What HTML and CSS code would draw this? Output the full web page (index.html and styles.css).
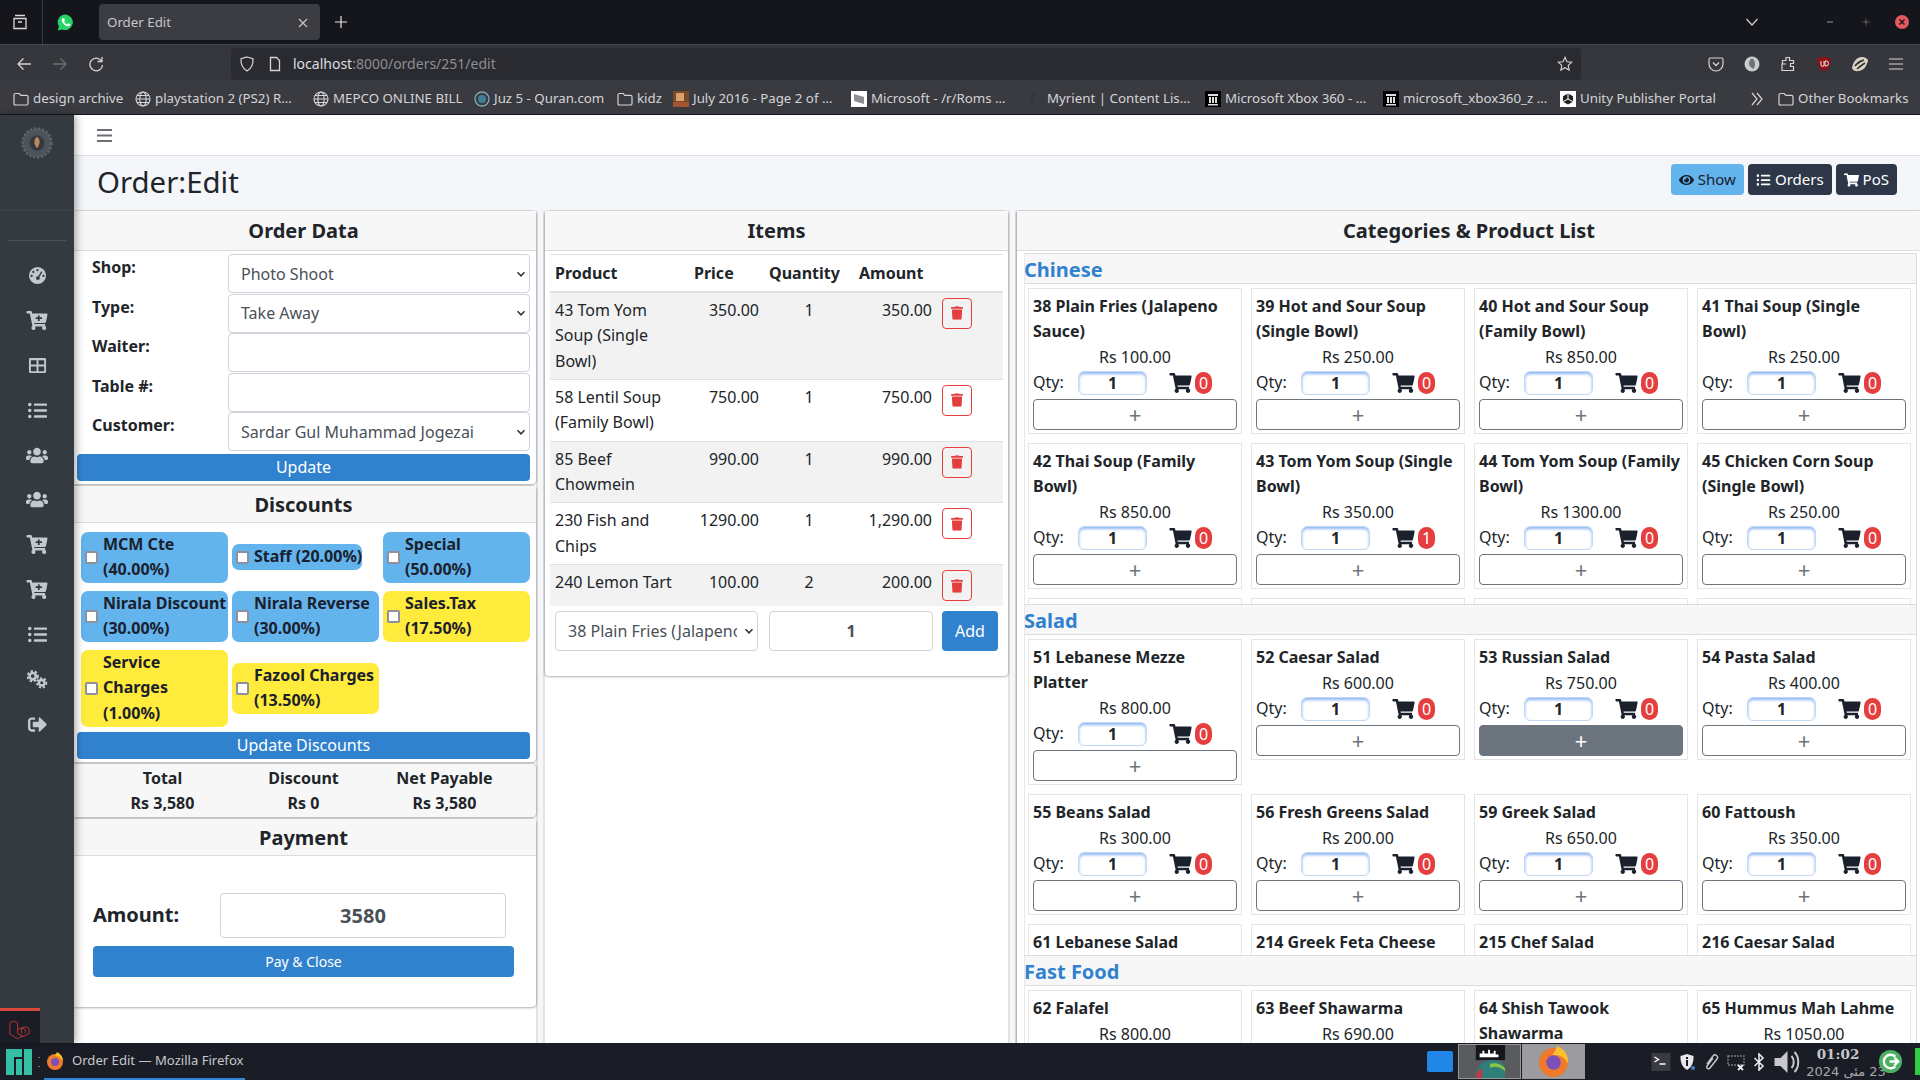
FILE: index.html
```html
<!DOCTYPE html>
<html lang="en">
<head>
    <meta charset="UTF-8">
    <title>Order Edit</title>
    <link rel="stylesheet" href="styles.css">
</head>
<body>
    <svg class="icon-defs" aria-hidden="true">
        <symbol id="i-cart" viewBox="0 0 576 512"><path d="M528.12 301.319l47.273-208C578.806 78.301 567.391 64 551.99 64H159.208l-9.166-44.81C147.758 8.021 137.93 0 126.529 0H24C10.745 0 0 10.745 0 24v16c0 13.255 10.745 24 24 24h69.883l70.248 343.435C147.325 417.1 136 435.222 136 456c0 30.928 25.072 56 56 56s56-25.072 56-56c0-15.674-6.447-29.835-16.824-40h209.647C430.447 426.165 424 440.326 424 456c0 30.928 25.072 56 56 56s56-25.072 56-56c0-22.172-12.888-41.332-31.579-50.405l5.517-24.276c3.413-15.018-8.002-29.319-23.403-29.319H218.117l-6.545-32h293.145c11.206 0 20.92-7.754 23.403-18.681z"/></symbol>
        <symbol id="i-cart-plus" viewBox="0 0 576 512"><path d="M504.717 320H211.572l6.545 32h268.418c15.401 0 26.816 14.301 23.403 29.319l-5.517 24.276C523.112 414.668 536 433.828 536 456c0 31.202-25.519 56.444-56.824 55.994-29.823-.429-54.35-24.631-55.155-54.447-.44-16.287 6.085-31.049 16.803-41.548H231.176C241.553 426.165 248 440.326 248 456c0 31.813-26.528 57.431-58.67 55.938-28.54-1.325-51.751-24.385-53.251-52.917-1.158-22.034 10.436-41.455 28.051-51.586L93.883 64H24C10.745 64 0 53.255 0 40V24C0 10.745 10.745 0 24 0h102.529c11.401 0 21.228 8.021 23.513 19.19L159.208 64H551.99c15.401 0 26.816 14.301 23.403 29.319l-47.273 208C525.637 312.246 515.923 320 504.717 320zM408 168h-48v-40c0-8.837-7.163-16-16-16h-16c-8.837 0-16 7.163-16 16v40h-48c-8.837 0-16 7.163-16 16v16c0 8.837 7.163 16 16 16h48v40c0 8.837 7.163 16 16 16h16c8.837 0 16-7.163 16-16v-40h48c8.837 0 16-7.163 16-16v-16c0-8.837-7.163-16-16-16z"/></symbol>
        <symbol id="i-trash" viewBox="0 0 448 512"><path d="M432 32H312l-9.4-18.7A24 24 0 0 0 281.1 0H166.8a23.72 23.72 0 0 0-21.4 13.3L136 32H16A16 16 0 0 0 0 48v32a16 16 0 0 0 16 16h416a16 16 0 0 0 16-16V48a16 16 0 0 0-16-16zM53.2 467a48 48 0 0 0 47.9 45h245.8a48 48 0 0 0 47.9-45L416 128H32z"/></symbol>
        <symbol id="i-list" viewBox="0 0 512 512"><path d="M48 48a48 48 0 1 0 48 48 48 48 0 0 0-48-48zm0 160a48 48 0 1 0 48 48 48 48 0 0 0-48-48zm0 160a48 48 0 1 0 48 48 48 48 0 0 0-48-48zm448 16H176a16 16 0 0 0-16 16v32a16 16 0 0 0 16 16h320a16 16 0 0 0 16-16v-32a16 16 0 0 0-16-16zm0-320H176a16 16 0 0 0-16 16v32a16 16 0 0 0 16 16h320a16 16 0 0 0 16-16V80a16 16 0 0 0-16-16zm0 160H176a16 16 0 0 0-16 16v32a16 16 0 0 0 16 16h320a16 16 0 0 0 16-16v-32a16 16 0 0 0-16-16z"/></symbol>
        <symbol id="i-eye" viewBox="0 0 576 512"><path d="M572.52 241.4C518.29 135.59 410.93 64 288 64S57.68 135.64 3.48 241.41a32.35 32.35 0 0 0 0 29.19C57.71 376.41 165.07 448 288 448s230.32-71.64 284.52-177.41a32.35 32.35 0 0 0 0-29.19zM288 400a144 144 0 1 1 144-144 143.93 143.93 0 0 1-144 144zm0-240a95.31 95.31 0 0 0-25.31 3.79 47.85 47.85 0 0 1-66.9 66.9A95.78 95.78 0 1 0 288 160z"/></symbol>
        <symbol id="i-users" viewBox="0 0 640 512"><path d="M96 224c35.3 0 64-28.7 64-64s-28.7-64-64-64-64 28.7-64 64 28.7 64 64 64zm448 0c35.3 0 64-28.7 64-64s-28.7-64-64-64-64 28.7-64 64 28.7 64 64 64zm32 32h-64c-17.6 0-33.5 7.1-45.1 18.6 40.3 22.1 68.9 62 75.1 109.4h66c17.7 0 32-14.3 32-32v-32c0-35.3-28.7-64-64-64zm-256 0c61.9 0 112-50.1 112-112S381.9 32 320 32 208 82.1 208 144s50.1 112 112 112zm76.8 32h-8.3c-20.8 10-43.9 16-68.5 16s-47.6-6-68.5-16h-8.3C179.6 288 128 339.6 128 403.2V432c0 26.5 21.5 48 48 48h288c26.5 0 48-21.5 48-48v-28.8c0-63.6-51.6-115.2-115.2-115.2zm-223.7-13.4C161.5 263.1 145.6 256 128 256H64c-35.3 0-64 28.7-64 64v32c0 17.7 14.3 32 32 32h65.9c6.3-47.4 34.9-87.3 75.2-109.4z"/></symbol>
        <symbol id="i-signout" viewBox="0 0 512 512"><path d="M497 273L329 441c-15 15-41 4.5-41-17v-96H152c-13.3 0-24-10.7-24-24v-96c0-13.3 10.7-24 24-24h136V88c0-21.4 25.9-32 41-17l168 168c9.3 9.4 9.3 24.6 0 34zM192 436v-40c0-6.6-5.4-12-12-12H96c-17.7 0-32-14.3-32-32V160c0-17.7 14.3-32 32-32h84c6.6 0 12-5.4 12-12V76c0-6.6-5.4-12-12-12H96c-53 0-96 43-96 96v192c0 53 43 96 96 96h84c6.6 0 12-5.4 12-12z"/></symbol>
        <symbol id="i-gauge" viewBox="0 0 20 20"><path fill-rule="evenodd" d="M10 1a9 9 0 1 1 0 18 9 9 0 0 1 0-18zM10 3.2a1.2 1.2 0 1 0 0 2.4 1.2 1.2 0 0 0 0-2.4zM5.6 5a1.2 1.2 0 1 0 0 2.4 1.2 1.2 0 0 0 0-2.4zM3.8 9.2a1.2 1.2 0 1 0 0 2.4 1.2 1.2 0 0 0 0-2.4zM16.2 9.2a1.2 1.2 0 1 0 0 2.4 1.2 1.2 0 0 0 0-2.4zM14 5.6l-3.2 5.3a1.9 1.9 0 1 0 1.2.8l3.2-5.3z"/></symbol>
        <symbol id="i-table" viewBox="0 0 20 20"><path fill-rule="evenodd" d="M2.5 2h15A1.5 1.5 0 0 1 19 3.500v13a1.500 1.500 0 0 1-1.500 1.500h-15A1.500 1.500 0 0 1 1 16.500v-13A1.500 1.500 0 0 1 2.500 2zM3 4.500V9h6V4.500zM11 4.500V9h6V4.500zM3 11v5h6v-5zM11 11v5h6v-5z"/></symbol>
        <symbol id="i-cogs" viewBox="0 0 22 20"><circle cx="6.500" cy="6.500" r="3.300" fill="none" stroke="currentColor" stroke-width="2.800"/><circle cx="6.500" cy="6.500" r="5.400" fill="none" stroke="currentColor" stroke-width="2" stroke-dasharray="2.500 2"/><circle cx="16" cy="13.500" r="2.900" fill="none" stroke="currentColor" stroke-width="2.600"/><circle cx="16" cy="13.500" r="5" fill="none" stroke="currentColor" stroke-width="2" stroke-dasharray="2.300 1.900"/></symbol>
        <symbol id="i-folder" viewBox="0 0 16 16"><path d="M2.500 2.500h3.800l1.500 1.800h5.700a1.500 1.500 0 0 1 1.500 1.500v6.700a1.500 1.500 0 0 1-1.500 1.500h-10.500A1.500 1.500 0 0 1 1 13V4a1.500 1.500 0 0 1 1.500-1.500z" fill="none" stroke="currentColor" stroke-width="1.200"/></symbol>
        <symbol id="i-globe" viewBox="0 0 16 16"><g fill="none" stroke="currentColor" stroke-width="1.100"><circle cx="8" cy="8" r="7"/><ellipse cx="8" cy="8" rx="3.200" ry="7"/><path d="M1 8h14M2 4.500h12M2 11.500h12"/></g></symbol>
    </svg>

    <!-- browser window chrome -->
    <div class="tab-bar">
        <div class="tab-side">
            <svg class="tab-tool" viewBox="0 0 16 16"><path d="M3 1.500h10M2 4.500h12v10H2zM6 8h4" fill="none" stroke="#d8d8dc" stroke-width="1.300"/></svg>
        </div>
        <svg class="tab-whatsapp" viewBox="0 0 16 16"><path d="M8 .5a7.300 7.300 0 0 0-6.200 11.200L.8 15.500l3.900-1A7.300 7.300 0 1 0 8 .5z" fill="#25d366"/><path d="M5.500 4c-.8.5-1.300 1.500-.8 2.900.9 2.300 2.500 3.900 4.700 4.700 1.400.4 2.400 0 2.800-.9l.2-1-1.900-.9-.9 1c-1.200-.5-2.300-1.500-2.900-2.800l.8-.9-.8-2z" fill="#fff"/></svg>
        <div class="tab">
            <span>Order Edit</span>
            <svg class="tab-close" viewBox="0 0 10 10"><path d="M1 1l8 8M9 1l-8 8" stroke="#c8c8cc" stroke-width="1.100"/></svg>
        </div>
        <svg class="tab-new" viewBox="0 0 12 12"><path d="M6 0v12M0 6h12" stroke="#e4e4e8" stroke-width="1.200"/></svg>
        <div class="tab-bar-end">
            <svg class="win-list" viewBox="0 0 12 8"><path d="M.5 1l5.500 6 5.500-6" fill="none" stroke="#d0d0d4" stroke-width="1.200"/></svg>
            <span class="win-min"></span>
            <svg class="win-max" viewBox="0 0 10 10"><path d="M5 0l.8 4.200L10 5l-4.200.8L5 10l-.8-4.200L0 5l4.200-.8z" fill="#55565b"/></svg>
            <svg class="win-close" viewBox="0 0 14 14"><circle cx="7" cy="7" r="7" fill="#e05a5f"/><path d="M4.500 4.500l5 5M9.500 4.500l-5 5" stroke="#33171a" stroke-width="1.600"/></svg>
        </div>
    </div>

    <div class="nav-bar">
        <svg class="nav-btn" viewBox="0 0 16 16"><path d="M15 8H2M7.500 2.500 2 8l5.500 5.500" fill="none" stroke="#d4d4d8" stroke-width="1.300"/></svg>
        <svg class="nav-btn" viewBox="0 0 16 16"><path d="M1 8h13M8.500 2.500 14 8l-5.500 5.500" fill="none" stroke="#6c6d72" stroke-width="1.300"/></svg>
        <svg class="nav-btn" viewBox="0 0 16 16"><path d="M13.500 5A6.300 6.300 0 1 0 14.500 9M14 1v4.500H9.500" fill="none" stroke="#d4d4d8" stroke-width="1.300"/></svg>
        <div class="url-bar">
            <svg class="url-icon" viewBox="0 0 16 16"><path d="M8 1l6 1.800c.3 5.200-1.500 9.700-6 12.200C3.500 12.500 1.700 8 2 2.800z" fill="none" stroke="#d4d4d8" stroke-width="1.200"/></svg>
            <svg class="url-icon" viewBox="0 0 16 16"><path d="M3.500 1.500h6l3 3v10h-9z" fill="none" stroke="#d4d4d8" stroke-width="1.300"/></svg>
            <span class="url-text"><b>localhost</b>:8000/orders/251/edit</span>
            <svg class="url-star" viewBox="0 0 16 16"><path d="M8 1.300l2 4.400 4.800.5-3.600 3.200 1 4.700L8 11.700l-4.200 2.400 1-4.700L1.200 6.200 6 5.700z" fill="none" stroke="#d4d4d8" stroke-width="1.100"/></svg>
        </div>
        <div class="nav-tools">
            <svg viewBox="0 0 16 16"><path d="M2.500 2h11A1.500 1.500 0 0 1 15 3.500V8A7 7 0 0 1 1 8V3.500A1.500 1.500 0 0 1 2.500 2z" fill="none" stroke="#d4d4d8" stroke-width="1.200"/><path d="M5 6.500l3 3 3-3" fill="none" stroke="#d4d4d8" stroke-width="1.300"/></svg>
            <svg viewBox="0 0 16 16"><circle cx="8" cy="8" r="7.500" fill="#c9cbcf"/><path d="M8 2.500c3 1 3.800 6 2 10-2.500.5-5.500-3-5-6 .500-2 1.500-3.500 3-4z" fill="#6f7277"/></svg>
            <svg viewBox="0 0 16 16"><path d="M6 1.500h3.500v3h4v3h-3v3h3v4H2v-6.500h4V8H2.500V4.500H6z" fill="none" stroke="#d4d4d8" stroke-width="1.200"/></svg>
            <svg viewBox="0 0 16 16"><path d="M8 .5l6.500 2c.3 6-1.500 10.500-6.500 13C3 13 1.200 8.500 1.500 2.500z" fill="#8c1218"/><path d="M5 5v4a1.500 1.500 0 0 0 3 0V5M9 5v5h1a2.500 2.500 0 0 0 0-5z" fill="none" stroke="#f0e6e6" stroke-width="1"/></svg>
            <svg viewBox="0 0 16 16"><path d="M0 12C1 6 4 2 9 1c3-.5 6 1 7 3-1 6-4 10-9 11-3 .5-6 0-7-3z" fill="#d9d3c4"/><path d="M3 10c2-3 5-5 9-6M5 13c2-2 5-4 8-6" stroke="#33332f" stroke-width="1.600"/></svg>
            <svg viewBox="0 0 16 16"><path d="M1 3h14M1 8h14M1 13h14" stroke="#d4d4d8" stroke-width="1.200"/></svg>
        </div>
    </div>

    <div class="bookmarks">
        <a class="bm"><svg class="bm-icon"><use href="#i-folder"/></svg>design archive</a>
        <a class="bm"><svg class="bm-icon"><use href="#i-globe"/></svg>playstation 2 (PS2) R…</a>
        <a class="bm"><svg class="bm-icon"><use href="#i-globe"/></svg>MEPCO ONLINE BILL</a>
        <a class="bm"><svg class="bm-icon" viewBox="0 0 16 16"><circle cx="8" cy="8" r="7" fill="none" stroke="#7fa7b5" stroke-width="1.400"/><circle cx="8" cy="8" r="4" fill="#3f7f95"/></svg>Juz 5 - Quran.com</a>
        <a class="bm"><svg class="bm-icon"><use href="#i-folder"/></svg>kidz</a>
        <a class="bm"><svg class="bm-icon" viewBox="0 0 16 16"><rect width="16" height="16" fill="#7a4a2a"/><rect x="3" y="2" width="8" height="8" fill="#d9a06b"/><rect y="11" width="16" height="5" fill="#a3552f"/></svg>July 2016 - Page 2 of …</a>
        <a class="bm"><svg class="bm-icon" viewBox="0 0 16 16"><rect width="16" height="16" fill="#fff"/><path d="M3 3l10 3v7L3 10z" fill="#8d8f93"/></svg>Microsoft - /r/Roms …</a>
        <a class="bm"><svg class="bm-icon" viewBox="0 0 16 16"><path d="M10 3a5 5 0 1 0 0 9 4 4 0 1 1 0-9z" fill="#33343f"/></svg>Myrient | Content Lis…</a>
        <a class="bm"><svg class="bm-icon" viewBox="0 0 16 16"><rect width="16" height="16" fill="#000"/><path d="M3 3h10v2H3zM4 6h2v6H4zM7 6h2v6H7zM10 6h2v6h-2zM3 13h10v1.500H3z" fill="#ddd"/></svg>Microsoft Xbox 360 - …</a>
        <a class="bm"><svg class="bm-icon" viewBox="0 0 16 16"><rect width="16" height="16" fill="#000"/><path d="M3 3h10v2H3zM4 6h2v6H4zM7 6h2v6H7zM10 6h2v6h-2zM3 13h10v1.500H3z" fill="#ddd"/></svg>microsoft_xbox360_z …</a>
        <a class="bm"><svg class="bm-icon" viewBox="0 0 16 16"><rect width="16" height="16" fill="#fff"/><path d="M8 2.500l5 2.800v5.400l-5 2.800-5-2.800V5.300z" fill="#222"/><path d="M8 8V2.500M8 8l-5 2.700M8 8l5 2.700" stroke="#fff"/></svg>Unity Publisher Portal</a>
        <svg class="bm-more" viewBox="0 0 14 14"><path d="M2 1l5 6-5 6M7 1l5 6-5 6" fill="none" stroke="#d4d4d8" stroke-width="1.200"/></svg>
        <a class="bm"><svg class="bm-icon"><use href="#i-folder"/></svg>Other Bookmarks</a>
    </div>

    <!-- the page itself -->
    <div class="app">
        <aside class="sidebar">
            <div class="side-logo">
                <svg viewBox="0 0 28 28"><circle cx="14" cy="14" r="12.500" fill="#4d535b" stroke="#5d636b" stroke-width="2.500" stroke-dasharray="2 1.500"/><circle cx="14" cy="14" r="6.500" fill="#343940"/><path d="M14 8.500c3 2 3 6.500 0 10-3-3.500-3-8 0-10z" fill="#bd875e"/></svg>
            </div>
            <div class="side-rule"></div>
            <nav class="side-nav">
                <svg viewBox="0 0 20 20"><use href="#i-gauge"/></svg>
                <svg class="wide" viewBox="0 0 576 512"><use href="#i-cart-plus"/></svg>
                <svg viewBox="0 0 20 20"><use href="#i-table"/></svg>
                <svg viewBox="0 0 512 512"><use href="#i-list"/></svg>
                <svg class="wide" viewBox="0 0 640 512"><use href="#i-users"/></svg>
                <svg class="wide" viewBox="0 0 640 512"><use href="#i-users"/></svg>
                <svg class="wide" viewBox="0 0 576 512"><use href="#i-cart-plus"/></svg>
                <svg class="wide" viewBox="0 0 576 512"><use href="#i-cart-plus"/></svg>
                <svg viewBox="0 0 512 512"><use href="#i-list"/></svg>
                <svg class="wide" viewBox="0 0 22 20"><use href="#i-cogs"/></svg>
                <svg viewBox="0 0 512 512"><use href="#i-signout"/></svg>
            </nav>
        </aside>

        <main class="main">
            <div class="topbar">
                <svg class="burger" viewBox="0 0 15 13"><path d="M0 1h15M0 6.500h15M0 12h15" stroke="#6b6e72" stroke-width="2"/></svg>
            </div>
            <div class="page-head">
                <h1>Order:Edit</h1>
                <div class="head-btns">
                    <a class="btn btn-info"><svg viewBox="0 0 576 512"><use href="#i-eye"/></svg>Show</a>
                    <a class="btn btn-dark"><svg viewBox="0 0 512 512"><use href="#i-list"/></svg>Orders</a>
                    <a class="btn btn-dark"><svg viewBox="0 0 576 512"><use href="#i-cart"/></svg>PoS</a>
                </div>
            </div>

            <div class="columns">
                <!-- left: order data, discounts, payment -->
                <div class="col col-left">
                    <section class="card">
                        <h3 class="card-title">Order Data</h3>
                        <div class="order-form">
                            <label>Shop:</label>
                            <select class="field"><option>Photo Shoot</option></select>
                            <label>Type:</label>
                            <select class="field"><option>Take Away</option></select>
                            <label>Waiter:</label>
                            <input class="field" type="text">
                            <label>Table #:</label>
                            <input class="field" type="text">
                            <label>Customer:</label>
                            <select class="field"><option>Sardar Gul Muhammad Jogezai</option></select>
                        </div>
                        <button class="btn-block">Update</button>
                    </section>

                    <section class="card">
                        <h3 class="card-title card-title-sm">Discounts</h3>
                        <div class="discounts">
                            <label class="chip chip-blue"><input type="checkbox"><span>MCM Cte (40.00%)</span></label>
                            <label class="chip chip-blue"><input type="checkbox"><span>Staff (20.00%)</span></label>
                            <label class="chip chip-blue"><input type="checkbox"><span>Special (50.00%)</span></label>
                            <label class="chip chip-blue"><input type="checkbox"><span>Nirala Discount (30.00%)</span></label>
                            <label class="chip chip-blue"><input type="checkbox"><span>Nirala Reverse (30.00%)</span></label>
                            <label class="chip chip-yellow"><input type="checkbox"><span>Sales.Tax (17.50%)</span></label>
                            <label class="chip chip-yellow"><input type="checkbox"><span>Service Charges (1.00%)</span></label>
                            <label class="chip chip-yellow"><input type="checkbox"><span>Fazool Charges (13.50%)</span></label>
                        </div>
                        <button class="btn-block">Update Discounts</button>
                    </section>

                    <section class="card totals">
                        <div>Total<br>Rs 3,580</div>
                        <div>Discount<br>Rs 0</div>
                        <div>Net Payable<br>Rs 3,580</div>
                    </section>

                    <section class="card">
                        <h3 class="card-title card-title-sm">Payment</h3>
                        <div class="payment">
                            <div class="amount-row">
                                <label>Amount:</label>
                                <input class="amount" type="text" value="3580">
                            </div>
                            <button class="btn-pay">Pay &amp; Close</button>
                        </div>
                    </section>
                </div>

                <!-- middle: items on the order -->
                <div class="col col-items">
                    <section class="card">
                        <h3 class="card-title">Items</h3>
                        <table class="items">
                            <thead>
                                <tr><th class="c-prod">Product</th><th class="c-price">Price</th><th class="c-qty">Quantity</th><th class="c-amt">Amount</th><th class="c-act"></th></tr>
                            </thead>
                            <tbody>
                                <tr><td>43 Tom Yom Soup (Single Bowl)</td><td class="num">350.00</td><td class="mid">1</td><td class="num">350.00</td><td><button class="del-btn"><svg viewBox="0 0 448 512"><use href="#i-trash"/></svg></button></td></tr>
                                <tr><td>58 Lentil Soup (Family Bowl)</td><td class="num">750.00</td><td class="mid">1</td><td class="num">750.00</td><td><button class="del-btn"><svg viewBox="0 0 448 512"><use href="#i-trash"/></svg></button></td></tr>
                                <tr><td>85 Beef Chowmein</td><td class="num">990.00</td><td class="mid">1</td><td class="num">990.00</td><td><button class="del-btn"><svg viewBox="0 0 448 512"><use href="#i-trash"/></svg></button></td></tr>
                                <tr><td>230 Fish and Chips</td><td class="num">1290.00</td><td class="mid">1</td><td class="num">1,290.00</td><td><button class="del-btn"><svg viewBox="0 0 448 512"><use href="#i-trash"/></svg></button></td></tr>
                                <tr><td>240 Lemon Tart</td><td class="num">100.00</td><td class="mid">2</td><td class="num">200.00</td><td><button class="del-btn"><svg viewBox="0 0 448 512"><use href="#i-trash"/></svg></button></td></tr>
                            </tbody>
                        </table>
                        <div class="add-row">
                            <select class="field add-select"><option>38 Plain Fries (Jalapeno Sauce)</option></select>
                            <input class="field add-qty" type="text" value="1">
                            <button class="add-submit">Add</button>
                        </div>
                    </section>
                </div>

                <!-- right: product picker -->
                <div class="col col-products">
                    <section class="card card-products">
                        <h3 class="card-title">Categories &amp; Product List</h3>
                        <div class="category">
                            <h4 class="cat-title">Chinese</h4>
                            <div class="product-grid">
                                <div class="product"><b>38 Plain Fries (Jalapeno Sauce)</b><p>Rs 100.00</p><div class="qty-row"><span>Qty:</span><input class="qty" value="1"><svg viewBox="0 0 576 512"><use href="#i-cart"/></svg><i>0</i></div><button class="plus">+</button></div>
                                <div class="product"><b>39 Hot and Sour Soup (Single Bowl)</b><p>Rs 250.00</p><div class="qty-row"><span>Qty:</span><input class="qty" value="1"><svg viewBox="0 0 576 512"><use href="#i-cart"/></svg><i>0</i></div><button class="plus">+</button></div>
                                <div class="product"><b>40 Hot and Sour Soup (Family Bowl)</b><p>Rs 850.00</p><div class="qty-row"><span>Qty:</span><input class="qty" value="1"><svg viewBox="0 0 576 512"><use href="#i-cart"/></svg><i>0</i></div><button class="plus">+</button></div>
                                <div class="product"><b>41 Thai Soup (Single Bowl)</b><p>Rs 250.00</p><div class="qty-row"><span>Qty:</span><input class="qty" value="1"><svg viewBox="0 0 576 512"><use href="#i-cart"/></svg><i>0</i></div><button class="plus">+</button></div>
                                <div class="product"><b>42 Thai Soup (Family Bowl)</b><p>Rs 850.00</p><div class="qty-row"><span>Qty:</span><input class="qty" value="1"><svg viewBox="0 0 576 512"><use href="#i-cart"/></svg><i>0</i></div><button class="plus">+</button></div>
                                <div class="product"><b>43 Tom Yom Soup (Single Bowl)</b><p>Rs 350.00</p><div class="qty-row"><span>Qty:</span><input class="qty" value="1"><svg viewBox="0 0 576 512"><use href="#i-cart"/></svg><i>1</i></div><button class="plus">+</button></div>
                                <div class="product"><b>44 Tom Yom Soup (Family Bowl)</b><p>Rs 1300.00</p><div class="qty-row"><span>Qty:</span><input class="qty" value="1"><svg viewBox="0 0 576 512"><use href="#i-cart"/></svg><i>0</i></div><button class="plus">+</button></div>
                                <div class="product"><b>45 Chicken Corn Soup (Single Bowl)</b><p>Rs 250.00</p><div class="qty-row"><span>Qty:</span><input class="qty" value="1"><svg viewBox="0 0 576 512"><use href="#i-cart"/></svg><i>0</i></div><button class="plus">+</button></div>
                                <div class="product product-peek"></div>
                                <div class="product product-peek"></div>
                                <div class="product product-peek"></div>
                                <div class="product product-peek"></div>
                            </div>
                        </div>
                        <div class="category">
                            <h4 class="cat-title">Salad</h4>
                            <div class="product-grid">
                                <div class="product"><b>51 Lebanese Mezze Platter</b><p>Rs 800.00</p><div class="qty-row"><span>Qty:</span><input class="qty" value="1"><svg viewBox="0 0 576 512"><use href="#i-cart"/></svg><i>0</i></div><button class="plus">+</button></div>
                                <div class="product"><b>52 Caesar Salad</b><p>Rs 600.00</p><div class="qty-row"><span>Qty:</span><input class="qty" value="1"><svg viewBox="0 0 576 512"><use href="#i-cart"/></svg><i>0</i></div><button class="plus">+</button></div>
                                <div class="product"><b>53 Russian Salad</b><p>Rs 750.00</p><div class="qty-row"><span>Qty:</span><input class="qty" value="1"><svg viewBox="0 0 576 512"><use href="#i-cart"/></svg><i>0</i></div><button class="plus plus-hover">+</button></div>
                                <div class="product"><b>54 Pasta Salad</b><p>Rs 400.00</p><div class="qty-row"><span>Qty:</span><input class="qty" value="1"><svg viewBox="0 0 576 512"><use href="#i-cart"/></svg><i>0</i></div><button class="plus">+</button></div>
                                <div class="product"><b>55 Beans Salad</b><p>Rs 300.00</p><div class="qty-row"><span>Qty:</span><input class="qty" value="1"><svg viewBox="0 0 576 512"><use href="#i-cart"/></svg><i>0</i></div><button class="plus">+</button></div>
                                <div class="product"><b>56 Fresh Greens Salad</b><p>Rs 200.00</p><div class="qty-row"><span>Qty:</span><input class="qty" value="1"><svg viewBox="0 0 576 512"><use href="#i-cart"/></svg><i>0</i></div><button class="plus">+</button></div>
                                <div class="product"><b>59 Greek Salad</b><p>Rs 650.00</p><div class="qty-row"><span>Qty:</span><input class="qty" value="1"><svg viewBox="0 0 576 512"><use href="#i-cart"/></svg><i>0</i></div><button class="plus">+</button></div>
                                <div class="product"><b>60 Fattoush</b><p>Rs 350.00</p><div class="qty-row"><span>Qty:</span><input class="qty" value="1"><svg viewBox="0 0 576 512"><use href="#i-cart"/></svg><i>0</i></div><button class="plus">+</button></div>
                                <div class="product"><b>61 Lebanese Salad</b></div>
                                <div class="product"><b>214 Greek Feta Cheese</b></div>
                                <div class="product"><b>215 Chef Salad</b></div>
                                <div class="product"><b>216 Caesar Salad</b></div>
                            </div>
                        </div>
                        <div class="category">
                            <h4 class="cat-title">Fast Food</h4>
                            <div class="product-grid">
                                <div class="product"><b>62 Falafel</b><p>Rs 800.00</p></div>
                                <div class="product"><b>63 Beef Shawarma</b><p>Rs 690.00</p></div>
                                <div class="product"><b>64 Shish Tawook Shawarma</b><p>Rs 1050.00</p></div>
                                <div class="product"><b>65 Hummus Mah Lahme</b><p>Rs 1050.00</p></div>
                            </div>
                        </div>
                    </section>
                </div>
            </div>
        </main>

        <!-- debugbar tab sits over the corner -->
        <div class="debug-tab">
            <svg viewBox="0 0 24 24"><path d="M2 5l4 -2 4 2v11l6 3.500 6-3.500v-5l-4-2-4 2v5M10 12l4-2 4 2v4M2 5v12l8 4.500 6-3" fill="none" stroke="#c0332e" stroke-width="1"/></svg>
        </div>
    </div>

    <!-- desktop panel -->
    <div class="taskbar">
        <svg class="tb-logo" viewBox="0 0 26 26"><path d="M0 0h16v8H8v18H0zM10 10h6v16h-6zM18 0h8v26h-8z" fill="#35bfa4"/></svg>
        <span class="tb-grip"></span>
        <div class="tb-task">
            <svg viewBox="0 0 18 18"><circle cx="9" cy="10" r="8" fill="#f0792b"/><circle cx="9" cy="10" r="4" fill="#7c50b8"/><path d="M11 0c4 2 6 5 6 9-2-3-5-5-8-5z" fill="#fbc02d"/></svg>
            <span>Order Edit — Mozilla Firefox</span>
        </div>
        <div class="tb-end">
            <span class="tb-blue"></span>
            <div class="tb-thumb tb-thumb-dark">
                <svg viewBox="0 0 59 35"><rect x="15" width="31" height="16" fill="#15161b"/><path d="M19 9h3v-3h2v3h4V5h2v4h4V6h2v4h3v3H19z" fill="#fff"/><path d="M15 35c0-10 6-18 15-19 8-1 14 2 16 8v11z" fill="#2f7f7a"/><path d="M15 35c0-6 3-9 7-10v10z" fill="#b83b4c"/><path d="M30 20c6-2 12 0 16 5v3c-4-5-10-6-16-4z" fill="#8fc63f"/></svg>
            </div>
            <div class="tb-thumb tb-thumb-light">
                <svg viewBox="0 0 32 32"><circle cx="16" cy="17" r="14" fill="#f0792b"/><circle cx="16" cy="17" r="7" fill="#7c50b8"/><path d="M20 1c7 4 11 9 10 17-3-6-9-9-15-8z" fill="#fbc02d"/></svg>
            </div>
            <div class="tb-tray">
                <svg class="tray-term" viewBox="0 0 19 18"><rect width="19" height="18" fill="#3a3b40"/><path d="M3 4l4 2.500-4 2.500M8 11h6" fill="none" stroke="#fff" stroke-width="1.400"/></svg>
                <svg viewBox="0 0 16 18"><path d="M8 1l6.500 2c.3 6-1.500 11-6.500 14C3 14 1.200 9 1.500 3z" fill="#e8e8e8"/><rect x="7" y="4" width="2" height="2" fill="#1a1d26"/><rect x="7" y="7" width="2" height="6" fill="#1a1d26"/><circle cx="14" cy="15" r="2" fill="#4a7fd0"/></svg>
                <svg viewBox="0 0 16 18"><path d="M4 11l6-8a2.500 2.500 0 0 1 4 3l-7 9a1.500 1.500 0 0 1-3-2l6-8" fill="none" stroke="#c8c8c8" stroke-width="1.400"/></svg>
                <svg class="tray-net" viewBox="0 0 18 18"><path d="M1 3h16v9H1z" fill="none" stroke="#777" stroke-width="1.400" stroke-dasharray="2 1"/><path d="M11 12l5 5M16 12l-5 5" stroke="#eee" stroke-width="1.800"/></svg>
                <svg class="tray-bt" viewBox="0 0 12 18"><path d="M1.500 5l8.500 8-4 4V1l4 4-8.500 8" fill="none" stroke="#ececec" stroke-width="1.600"/></svg>
                <svg class="tray-vol" viewBox="0 0 26 26"><path d="M1 9h6l7-7v22l-7-7H1z" fill="#c8c8cc"/><path d="M18 7c3 3 3 9 0 12M21 3c5 5 5 15 0 20" fill="none" stroke="#c8c8cc" stroke-width="2"/></svg>
            </div>
            <div class="tb-clock">
                <span class="tb-time">01:02</span>
                <span class="tb-date" dir="rtl">23 مئی 2024</span>
            </div>
            <svg class="tb-update" viewBox="0 0 26 26"><circle cx="13" cy="13" r="12" fill="#4caf62"/><path d="M18 8a7 7 0 1 0 0 10" fill="none" stroke="#fff" stroke-width="2.500"/><path d="M12 13h8M17 9l4 4-4 4" fill="none" stroke="#fff" stroke-width="2.500"/></svg>
            <span class="tb-bar"></span>
        </div>
    </div>
</body>
</html>
```

FILE: styles.css
```css
* {
    box-sizing: border-box;
}

html, body {
    margin: 0;
    height: 1080px;
    overflow: hidden;
}

body {
    display: flex;
    flex-direction: column;
    font-family: "Noto Sans", "DejaVu Sans", sans-serif;
    font-size: 16px;
    line-height: 25.6px;
    color: #212529;
    background: #fff;
}

.icon-defs {
    display: none;
}

/* Browser chrome */
.tab-bar {
    height: 44px;
    display: flex;
    align-items: center;
    background: #15161b;
    flex-shrink: 0;
}

.tab-side {
    width: 43px;
    height: 44px;
    display: flex;
    align-items: center;
    padding-left: 12px;
    border-right: 1px solid #3a3b40;
}

.tab-tool {
    width: 16px;
    height: 16px;
}

.tab-whatsapp {
    width: 17px;
    height: 17px;
    margin-left: 14px;
}

.tab {
    width: 221px;
    height: 36px;
    margin-left: 25px;
    padding: 1px 12px 0 8px;
    display: flex;
    align-items: center;
    justify-content: space-between;
    background: #3c3d43;
    border-radius: 4px;
    color: #c6c6ca;
    font-size: 13.3px;
}

.tab-close {
    width: 10px;
    height: 10px;
}

.tab-new {
    width: 12px;
    height: 12px;
    margin-left: 15px;
}

.tab-bar-end {
    margin-left: auto;
    display: flex;
    align-items: center;
}

.win-list {
    width: 12px;
    height: 8px;
    margin-right: 69px;
}

.win-min {
    width: 6px;
    height: 2px;
    background: #55565b;
    margin-right: 28px;
}

.win-max {
    width: 10px;
    height: 10px;
    margin-right: 24px;
}

.win-close {
    width: 14px;
    height: 14px;
    margin-right: 11px;
}

.nav-bar {
    height: 36px;
    display: flex;
    align-items: flex-end;
    background: #36373c;
    border-top: 1px solid #45464b;
    flex-shrink: 0;
}

.nav-btn {
    width: 16px;
    height: 16px;
    margin: 0 0 8px 20px;
}

.nav-btn:first-child {
    margin-left: 16px;
}

.url-bar {
    width: 1350px;
    height: 32px;
    margin-left: 127px;
    padding: 0 8px 0 8px;
    display: flex;
    align-items: center;
    background: #2a2b30;
    border-radius: 4px;
}

.url-icon {
    width: 16px;
    height: 16px;
    margin-right: 12px;
}

.url-text {
    font-size: 14px;
    color: #8e8e93;
    margin-left: -2px;
}

.url-text b {
    font-weight: 400;
    color: #dedee2;
}

.url-star {
    width: 16px;
    height: 16px;
    margin-left: auto;
}

.nav-tools {
    display: flex;
    gap: 20px;
    margin-left: 127px;
    padding-bottom: 8px;
}

.nav-tools svg {
    width: 16px;
    height: 16px;
}

.bookmarks {
    height: 35px;
    padding: 3px 0 0 13px;
    display: grid;
    grid-template-columns: 122px 178px 161px 143px 56px 178px 176px 178px 178px 177px 190px 28px 1fr;
    align-items: center;
    background: #3a3b40;
    border-bottom: 1px solid #16171b;
    color: #d4d4d8;
    font-size: 13.3px;
    flex-shrink: 0;
}

.bm {
    display: flex;
    align-items: center;
    gap: 4px;
    white-space: nowrap;
}

.bm-icon {
    width: 16px;
    height: 16px;
    flex-shrink: 0;
}

.bm-more {
    width: 14px;
    height: 14px;
}

/* App frame */
.app {
    position: relative;
    flex: 1;
    min-height: 0;
    display: flex;
}

.sidebar {
    width: 74px;
    flex-shrink: 0;
    background: #343a40;
    box-shadow: 2px 0 8px rgba(0, 0, 0, 0.35);
    z-index: 2;
}

.side-logo {
    height: 96px;
    padding-top: 12px;
    display: flex;
    justify-content: center;
    border-bottom: 1px solid #3f454b;
}

.side-logo svg {
    width: 32px;
    height: 32px;
}

.side-rule {
    height: 30px;
    margin: 0 8px;
    border-bottom: 1px solid #4b5157;
}

.side-nav {
    margin-top: 25px;
    display: flex;
    flex-direction: column;
    align-items: center;
}

.side-nav svg {
    width: 19px;
    height: 19px;
    margin-bottom: 25.9px;
    fill: #c2c7d0;
    color: #c2c7d0;
}

.side-nav .wide {
    width: 22px;
}

.main {
    flex: 1;
    min-width: 0;
    display: flex;
    flex-direction: column;
}

.topbar {
    height: 41px;
    padding-left: 23px;
    display: flex;
    align-items: center;
    background: #fff;
    border-bottom: 1px solid #dee2e6;
    flex-shrink: 0;
}

.burger {
    width: 15px;
    height: 13px;
}

.page-head {
    height: 54px;
    padding: 8px 23px 0 23px;
    display: flex;
    justify-content: space-between;
    align-items: flex-start;
    background: #f4f6f9;
    flex-shrink: 0;
}

.page-head h1 {
    margin: 0;
    font-size: 29.4px;
    font-weight: 400;
    line-height: 36px;
}

.head-btns {
    display: flex;
    gap: 4px;
}

.btn {
    height: 31px;
    padding: 0 8px;
    display: flex;
    align-items: center;
    gap: 4px;
    border-radius: 4px;
    font-size: 15px;
}

.btn svg {
    width: 15px;
    height: 14px;
    fill: currentColor;
}

.btn-info {
    background: #63b3ed;
    color: #1a202c;
}

.btn-dark {
    background: #2d3748;
    color: #fff;
}

/* Three columns */
.columns {
    flex: 1;
    min-height: 0;
    padding-top: 1px;
    display: grid;
    grid-template-columns: 464px 467px 1fr;
    gap: 5px;
    background: #f4f6f9;
    overflow: hidden;
}

.col {
    display: flex;
    flex-direction: column;
    gap: 2px;
    min-width: 0;
    background: #fff;
    border-right: 2px solid #e2e3e5;
}

.col-items {
    border-left: 2px solid #e2e3e5;
}

.col-products {
    border-left: 2px solid #e2e3e5;
    border-right: 0;
}

.card {
    background: #fff;
    border-radius: 0 4px 4px 0;
    box-shadow: 0 0 2px rgba(0, 0, 0, 0.4), 0 1px 3px rgba(0, 0, 0, 0.2);
}

.card-title {
    height: 40px;
    margin: 0;
    font-size: 20px;
    font-weight: 700;
    line-height: 40px;
    text-align: center;
    background: #f7f7f7;
    border-bottom: 1px solid #dcdcdc;
}

.card-title-sm {
    height: 37px;
    line-height: 37px;
}

.col-left .card-title {
    padding-right: 3px;
}

.order-form {
    margin-top: 3px;
    display: grid;
    grid-template-columns: 154px 302px;
    grid-auto-rows: 39.5px;
    font-weight: 700;
}

.order-form label {
    padding: 1px 0 0 18px;
}

.field {
    height: 39px;
    width: 100%;
    padding: 0 12px;
    font-family: inherit;
    font-size: 16px;
    color: #495057;
    background: #fff;
    border: 1px solid #ced4da;
    border-radius: 4px;
    font-weight: 400;
}

select.field {
    appearance: none;
    padding-right: 20px;
    background: #fff url("data:image/svg+xml,%3Csvg xmlns='http://www.w3.org/2000/svg' width='10' height='10' viewBox='0 0 10 10'%3E%3Cpath d='M1.500 3.200 5 6.800l3.500-3.600' fill='none' stroke='%23333' stroke-width='1.500'/%3E%3C/svg%3E") no-repeat right 3px center;
}

.btn-block {
    display: block;
    width: 453px;
    height: 27px;
    margin: 2px 0 3px 3px;
    padding: 0;
    font-family: inherit;
    font-size: 16px;
    color: #fff;
    background: #3182ce;
    border: none;
    border-radius: 4px;
}

.discounts {
    padding: 9px 6px 3px 7px;
    display: grid;
    grid-template-columns: repeat(3, 147px);
    gap: 8px 4px;
    align-items: center;
}

.chip {
    width: fit-content;
    max-width: 100%;
    display: flex;
    align-items: center;
    gap: 5px;
    padding-left: 4px;
    border-radius: 7px;
    font-weight: 700;
    color: #1a202c;
}

.chip input {
    appearance: none;
    width: 13px;
    height: 13px;
    margin: 0;
    flex-shrink: 0;
    background: #fff;
    border: 2px solid #8f8f9d;
    border-radius: 2px;
}

.chip-blue {
    background: #63b3ed;
}

.chip-yellow {
    background: #ffeb3b;
}

.totals {
    height: 53px;
    padding: 2px 21px 0 18px;
    display: grid;
    grid-template-columns: repeat(3, 1fr);
    text-align: center;
    font-weight: 700;
    line-height: 25px;
    background: #f7f7f7;
}

.payment {
    height: 151px;
    padding: 37px 0 0 19px;
}

.amount-row {
    display: flex;
    align-items: center;
}

.amount-row label {
    width: 127px;
    font-size: 20px;
    font-weight: 700;
}

.amount {
    width: 286px;
    height: 45px;
    text-align: center;
    font-family: inherit;
    font-size: 20px;
    font-weight: 700;
    color: #495057;
    border: 1px solid #ced4da;
    border-radius: 4px;
}

.btn-pay {
    display: block;
    width: 421px;
    height: 31px;
    margin-top: 8px;
    font-family: inherit;
    font-size: 14px;
    color: #fff;
    background: #3182ce;
    border: none;
    border-radius: 4px;
}

/* Items table */
.col-items .card {
    border-radius: 4px;
}

.items {
    width: 453px;
    margin: 3px 0 0 5px;
    border-collapse: collapse;
    table-layout: fixed;
    border-top: 1px solid #dee2e6;
}

.items th {
    height: 37px;
    padding: 2px 5px 0;
    text-align: left;
    border-bottom: 2px solid #dee2e6;
}

.c-prod { width: 139px; }
.c-price { width: 75px; }
.c-qty { width: 90px; }
.c-amt { width: 83px; }
.c-act { width: 66px; }

.items td {
    padding: 5px 5px 4.600px;
    vertical-align: top;
    border-top: 1px solid #dee2e6;
}

.items tbody tr:nth-child(odd) {
    background: #f2f2f2;
}

.items .num {
    text-align: right;
}

.items .mid {
    text-align: center;
}

.del-btn {
    display: block;
    width: 30px;
    height: 31px;
    padding: 0;
    background: transparent;
    border: 1px solid #e53e3e;
    border-radius: 4px;
}

.del-btn svg {
    display: block;
    width: 12px;
    height: 14px;
    margin: auto;
    fill: #e53e3e;
}

.add-row {
    margin: 5px 0 0;
    padding: 0 10px 25px;
    display: flex;
}

.add-select {
    width: 203px;
    height: 40px;
}

.add-qty {
    width: 164px;
    height: 40px;
    margin-left: 11px;
    text-align: center;
    font-weight: 700;
}

.add-submit {
    width: 56px;
    height: 40px;
    margin-left: 9px;
    padding: 0;
    font-family: inherit;
    font-size: 16px;
    color: #fff;
    background: #3182ce;
    border: none;
    border-radius: 4px;
}

/* Products */
.card-products {
    flex: 1;
    min-height: 0;
    overflow: hidden;
    padding-bottom: 0;
    border-radius: 0;
}

.card-products .card-title {
    margin-bottom: 2px;
    padding-left: 1px;
}

.category {
    height: 351px;
    margin: 0 3px 0 7px;
    overflow: hidden;
    background: #fff;
    border-top: 1px solid #dcdcdc;
    border-right: 1px solid #dcdcdc;
    border-left: 1px solid #e8e8e8;
}

.cat-title {
    height: 30px;
    margin: 0;
    text-indent: -1px;
    font-size: 20px;
    font-weight: 700;
    line-height: 32px;
    color: #3182ce;
    background: #f7f7f7;
    border-bottom: 1px solid #dcdcdc;
}

.product-grid {
    padding: 4px 0 0 3px;
    display: grid;
    grid-template-columns: repeat(4, 214px);
    gap: 9px;
    align-items: start;
}

.product {
    padding: 5px 4px 3.500px;
    background: #fff;
    border: 1px solid #e5e5e5;
}

.product-peek {
    height: 40px;
}

.product b {
    display: block;
    margin-bottom: 1px;
    line-height: 25px;
}

.product p {
    margin: 0;
    text-align: center;
}

.qty-row {
    height: 25px;
    display: flex;
    align-items: center;
}

.qty-row span {
    width: 45px;
}

.qty {
    width: 69px;
    height: 24px;
    padding: 0;
    text-align: center;
    font-family: inherit;
    font-size: 16px;
    font-weight: 700;
    color: #212529;
    background: #fff;
    border: 1px solid #c3d8f3;
    border-radius: 6px;
    box-shadow: inset 0 2px 3px rgba(66, 133, 244, 0.6);
}

.qty-row svg {
    width: 23px;
    height: 20px;
    margin-left: 22px;
    fill: #1a202c;
}

.qty-row i {
    width: 17px;
    height: 22px;
    margin-left: 3px;
    font-style: normal;
    line-height: 22px;
    text-align: center;
    color: #fff;
    background: #e53e3e;
    border-radius: 9px;
}

.plus {
    display: block;
    width: 100%;
    height: 31px;
    margin-top: 3px;
    padding: 0;
    font-family: inherit;
    font-size: 22px;
    line-height: 1;
    color: #6c757d;
    background: #fff;
    border: 1px solid #6c757d;
    border-radius: 4px;
}

.plus-hover {
    color: #fff;
    background: #6c757d;
}

/* Debugbar tab */
.debug-tab {
    position: absolute;
    left: 0;
    bottom: 0;
    width: 40px;
    height: 35px;
    padding: 7px 8px;
    background: #1a1d26;
    border-top: 3px solid #d9483b;
    z-index: 3;
}

.debug-tab svg {
    display: block;
    width: 23px;
    height: 23px;
}

/* Desktop panel */
.taskbar {
    height: 37px;
    display: flex;
    align-items: center;
    background: #1a1d26;
    flex-shrink: 0;
    color: #c8c8cc;
}

.tb-logo {
    width: 26px;
    height: 26px;
    margin-left: 6px;
}

.tb-grip {
    width: 2px;
    height: 10px;
    margin-left: 6px;
    border-top: 1px solid #777;
    border-bottom: 1px solid #777;
}

.tb-task {
    width: 201px;
    height: 37px;
    margin-left: 4px;
    padding-left: 2px;
    display: flex;
    align-items: center;
    gap: 8px;
    font-size: 13.100px;
    white-space: nowrap;
    border-bottom: 2px solid #2e86d6;
}

.tb-task svg {
    width: 18px;
    height: 18px;
    flex-shrink: 0;
}

.tb-end {
    margin-left: auto;
    display: flex;
    align-items: center;
    height: 37px;
}

.tb-blue {
    width: 26px;
    height: 21px;
    margin-right: 5px;
    background: #2086e6;
    border-radius: 2px;
}

.tb-thumb {
    width: 63px;
    height: 35px;
    margin-right: 1px;
    display: flex;
    align-items: center;
    justify-content: center;
    border: 1px solid #999;
}

.tb-thumb-dark {
    background: #5a5b5f;
}

.tb-thumb-light {
    background: #9c9c9e;
}

.tb-thumb svg {
    height: 33px;
    width: 100%;
}

.tb-tray {
    margin-left: 65px;
    display: flex;
    align-items: center;
    gap: 8px;
}

.tb-tray svg {
    width: 16px;
    height: 18px;
}

.tb-tray .tray-term {
    width: 20px;
}

.tb-tray .tray-net {
    width: 18px;
}

.tb-tray .tray-bt {
    width: 12px;
}

.tb-tray .tray-vol {
    width: 27px;
    height: 26px;
}

.tb-clock {
    width: 66px;
    margin-left: 5px;
    display: flex;
    flex-direction: column;
    align-items: center;
}

.tb-time {
    font-family: "DejaVu Serif", serif;
    font-size: 13.5px;
    font-weight: 700;
    line-height: 18px;
}

.tb-date {
    margin-left: 16px;
    padding-top: 1px;
    font-family: "DejaVu Sans", sans-serif;
    font-size: 13px;
    line-height: 15px;
    color: #a8a8ac;
    white-space: nowrap;
}

.tb-update {
    width: 25px;
    height: 25px;
    margin-left: 7px;
}

.tb-bar {
    width: 5px;
    height: 27px;
    margin-left: 12px;
    background: #2ecc40;
}
```
